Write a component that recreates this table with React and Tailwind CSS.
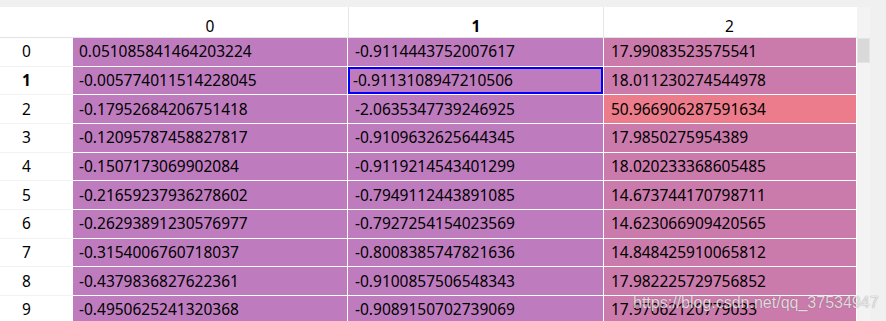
const rows = [
  ['0.051085841464203224', '-0.9114443752007617', '17.99083523575541'],
  ['-0.005774011514228045', '-0.9113108947210506', '18.011230274544978'],
  ['-0.17952684206751418', '-2.0635347739246925', '50.966906287591634'],
  ['-0.12095787458827817', '-0.9109632625644345', '17.9850275954389'],
  ['-0.1507173069902084', '-0.9119214543401299', '18.020233368605485'],
  ['-0.21659237936278602', '-0.7949112443891085', '14.673744170798711'],
  ['-0.26293891230576977', '-0.7927254154023569', '14.623066909420565'],
  ['-0.3154006760718037', '-0.8008385747821636', '14.848425910065812'],
  ['-0.4379836827622361', '-0.9100857506548343', '17.982225729756852'],
  ['-0.4950625241320368', '-0.9089150702739069', '17.97062120779033'],
]

const widths = ['w-[274px]', 'w-[255px]', 'w-[252px]']

const cellColor = (r, c) => {
  if (c === 2) return r === 2 ? 'bg-[#ec7c8b]' : 'bg-[#cb7bab]'
  return 'bg-[#be7cbe]'
}

const App = () => {
  return (
    <div
      className="relative w-[886px] h-[321px] overflow-hidden bg-[#f0f0f0] text-[15.5px] text-black"
      style={{ fontFamily: '"Noto Sans", "Open Sans", sans-serif' }}
    >
      <div className="h-[7px]" />
      <div className="flex">
        {/* table */}
        <div className="w-[857px] bg-white">
          {/* column header */}
          <div className="flex h-[31px] border-b border-[#e3e3e3]">
            <div className="w-[73px]" />
            {['0', '1', '2'].map((h, i) => (
              <div
                key={h}
                className={`${widths[i]} ${i > 0 ? 'border-l border-[#e6e6e6]' : 'mr-px'} flex justify-center pt-[9px] leading-[21px] ${i === 1 ? 'font-bold' : ''}`}
              >
                {h}
              </div>
            ))}
          </div>

          {/* body */}
          {rows.map((row, r) => (
            <div key={r} className="flex h-[28.67px]">
              <div
                className={`w-[73px] pl-[22px] flex items-center leading-[21px] border-b border-[#f2f2f2] ${r === 1 ? 'font-bold' : ''}`}
              >
                {r}
              </div>
              {row.map((v, c) => {
                const selected = r === 1 && c === 1
                return (
                  <div
                    key={c}
                    className={`${widths[c]} ${c < 2 ? 'mr-px' : ''} mb-px flex items-center leading-[21px] ${cellColor(r, c)} ${selected ? 'border-2 border-[#0000ff] pl-[3px]' : c === 0 ? 'pl-[6px]' : 'pl-[7px]'}`}
                  >
                    {v}
                  </div>
                )
              })}
            </div>
          ))}
        </div>

        {/* scrollbar */}
        <div className="w-[13px] h-[314px] bg-[#f3f3f3] pt-[31px]">
          <div className="w-[13px] h-[25px] bg-[#d9d9d9] border border-[#e4e4e4]" />
        </div>
      </div>

      {/* watermark */}
      <div
        className="absolute left-[633px] top-[291px] text-[16px] text-white/80 [text-shadow:0_0_1px_rgba(0,0,0,0.5)] whitespace-nowrap"
        style={{ fontFamily: '"Liberation Sans", Arial, sans-serif' }}
      >
        https://blog.csdn.net/qq_37534947
      </div>
    </div>
  )
}

export default App
